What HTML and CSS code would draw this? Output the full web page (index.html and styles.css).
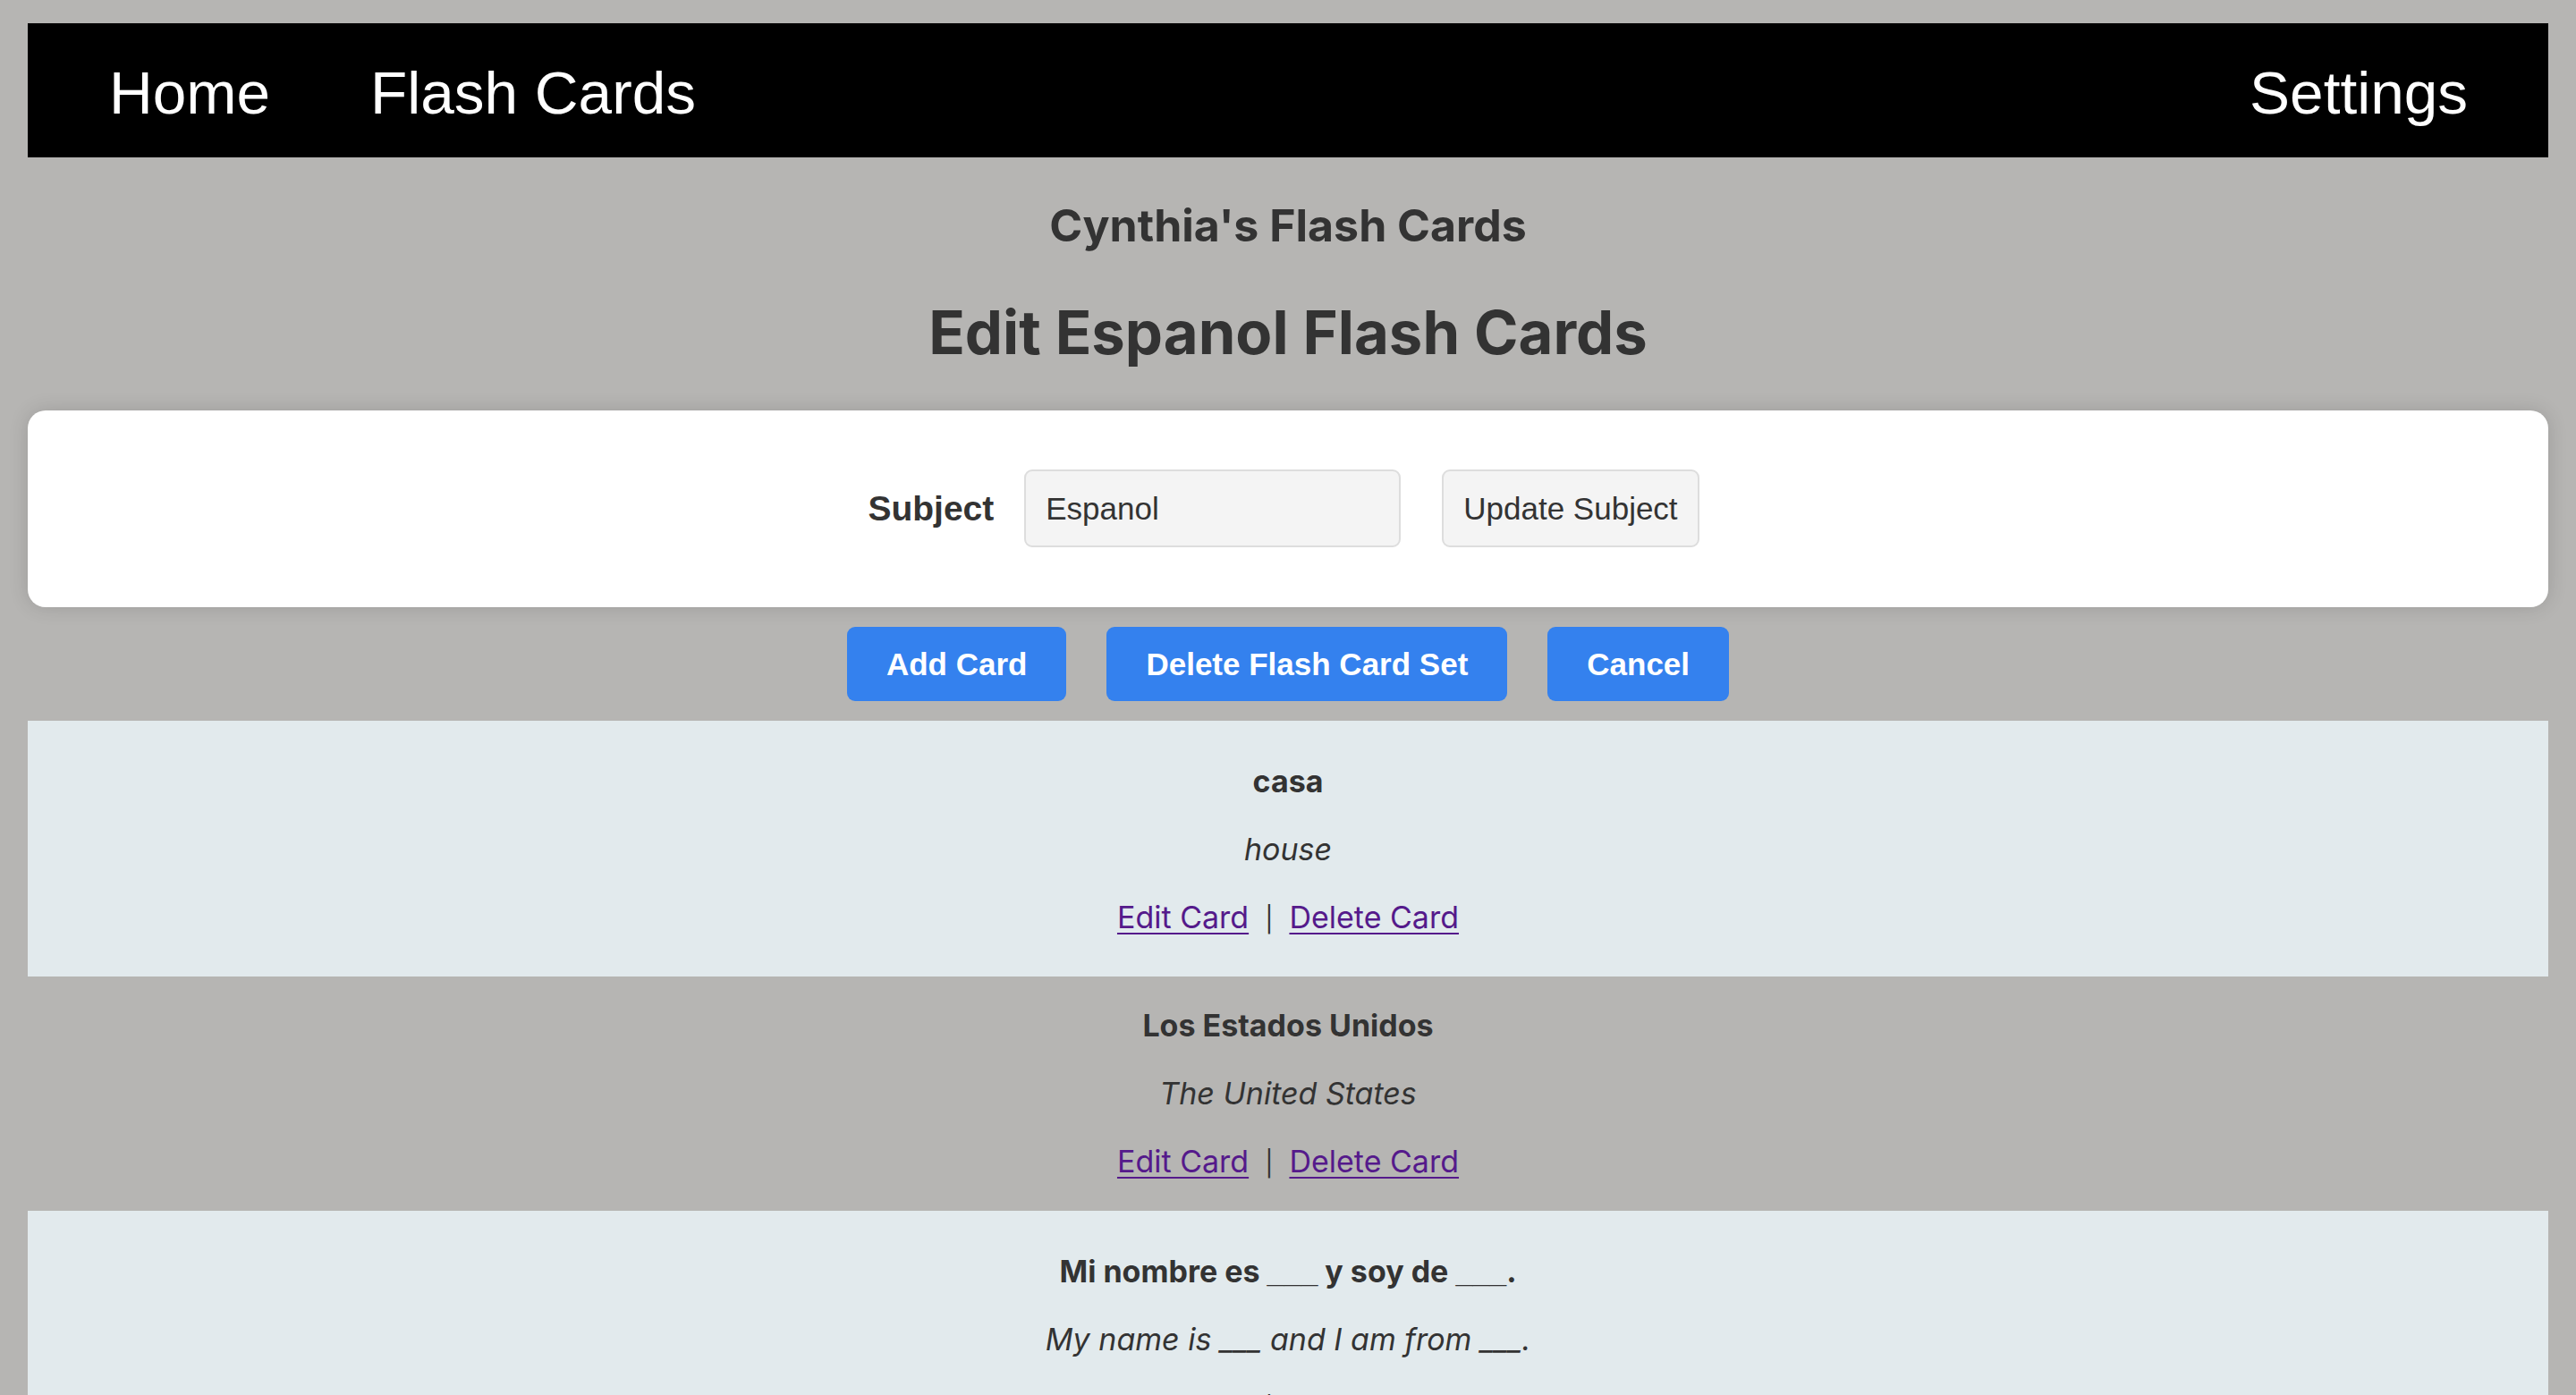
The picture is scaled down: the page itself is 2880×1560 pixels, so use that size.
FILE: index.html
```html
<!DOCTYPE html>
<html lang="en">
<head>
<meta charset="utf-8">
<title>Edit Espanol Flash Cards</title>
<link rel="stylesheet" href="styles.css">
</head>
<body>
<div class="page">
  <nav class="nav">
    <div class="nav-left">
      <a class="nav-link" href="#">Home</a>
      <a class="nav-link" href="#">Flash Cards</a>
    </div>
    <a class="nav-link" href="#">Settings</a>
  </nav>

  <h2 class="owner">Cynthia's Flash Cards</h2>
  <h1 class="title">Edit Espanol Flash Cards</h1>

  <section class="subject-card">
    <form class="subject-form">
      <label class="subject-label" for="subject">Subject</label>
      <input class="subject-input" id="subject" type="text" value="Espanol">
      <button class="subject-btn" type="button">Update Subject</button>
    </form>
  </section>

  <div class="actions">
    <button class="primary-btn" type="button">Add Card</button>
    <button class="primary-btn" type="button">Delete Flash Card Set</button>
    <button class="primary-btn" type="button">Cancel</button>
  </div>

  <div class="card-list">
    <div class="card-row">
      <p class="term">casa</p>
      <p class="definition">house</p>
      <p class="card-links"><a href="#">Edit Card</a><span class="sep">|</span><a href="#">Delete Card</a></p>
    </div>
    <div class="card-row">
      <p class="term">Los Estados Unidos</p>
      <p class="definition">The United States</p>
      <p class="card-links"><a href="#">Edit Card</a><span class="sep">|</span><a href="#">Delete Card</a></p>
    </div>
    <div class="card-row">
      <p class="term">Mi nombre es <span class="blank">___</span> y soy de <span class="blank">___</span>.</p>
      <p class="definition">My name is ___ and I am from ___.</p>
      <p class="card-links"><a href="#">Edit Card</a><span class="sep">|</span><a href="#">Delete Card</a></p>
    </div>
  </div>
</div>
</body>
</html>
```

FILE: styles.css
```css
html, body {
  margin: 0;
  background: #b6b5b3;
}

body {
  font-family: Inter, "Noto Sans", sans-serif;
  color: #333;
}

.page {
  padding: 26px 31px 0;
}

/* Navigation */
.nav {
  height: 150px;
  box-sizing: border-box;
  padding: 6px 90px 0 91px;
  background: #000;
  display: flex;
  align-items: center;
  justify-content: space-between;
  font-family: "Liberation Sans", Arial, sans-serif;
  font-size: 67.5px;
}

.nav-left {
  display: flex;
  gap: 112px;
}

.nav-link {
  color: #fff;
  text-decoration: none;
  line-height: 1;
}

/* Headings */
.owner {
  margin: 46px 0 0;
  font-size: 50px;
  line-height: 60px;
  font-weight: 700;
  text-align: center;
}

.title {
  margin: 50px 0 0;
  font-size: 67px;
  line-height: 80px;
  font-weight: 700;
  text-align: center;
}

/* Subject card */
.subject-card {
  margin-top: 47px;
  padding: 66px 0 67px;
  background: #fff;
  border-radius: 20px;
  box-shadow: 0 0 22px rgba(0, 0, 0, 0.14);
}

.subject-form {
  display: flex;
  align-items: center;
  justify-content: center;
  padding-right: 10px;
  font-family: "Liberation Sans", Arial, sans-serif;
}

.subject-label {
  margin-right: 34px;
  font-size: 39px;
  font-weight: 700;
  color: #333;
}

.subject-input {
  box-sizing: border-box;
  width: 421px;
  height: 87px;
  padding: 0 22px;
  border: 2px solid #dddddd;
  border-radius: 9px;
  background: #f4f4f4;
  font-family: "Liberation Sans", Arial, sans-serif;
  font-size: 35px;
  color: #333;
  outline: none;
}

.subject-btn {
  box-sizing: border-box;
  height: 87px;
  margin-left: 46px;
  padding: 0 22px;
  border: 2px solid #dddddd;
  border-radius: 9px;
  background: #f4f4f4;
  font-family: "Liberation Sans", Arial, sans-serif;
  font-size: 35px;
  color: #333;
}

/* Actions */
.actions {
  margin-top: 22px;
  display: flex;
  justify-content: center;
  gap: 45px;
}

.primary-btn {
  height: 83px;
  padding: 0 44px;
  border: none;
  border-radius: 9px;
  background: #3481ee;
  color: #fff;
  font-family: "Liberation Sans", Arial, sans-serif;
  font-size: 35px;
  font-weight: 700;
}

/* Cards */
.card-list {
  margin-top: 22px;
}

.card-row {
  padding: 17px 0 15px;
  text-align: center;
}

.card-row:nth-child(odd) {
  padding: 30px 0 26px;
  background: #e2eaed;
}

.card-row p {
  margin: 0;
  font-size: 34px;
  line-height: 76px;
}

.term {
  font-weight: 700;
}

.definition {
  font-style: italic;
}

.blank {
  font-family: "Liberation Sans", Arial, sans-serif;
}

.card-links a {
  color: #551a8b;
  text-decoration: underline;
  text-decoration-thickness: 2px;
  text-underline-offset: 5px;
}

.sep {
  margin: 0 18px;
  font-size: 28px;
}
```
